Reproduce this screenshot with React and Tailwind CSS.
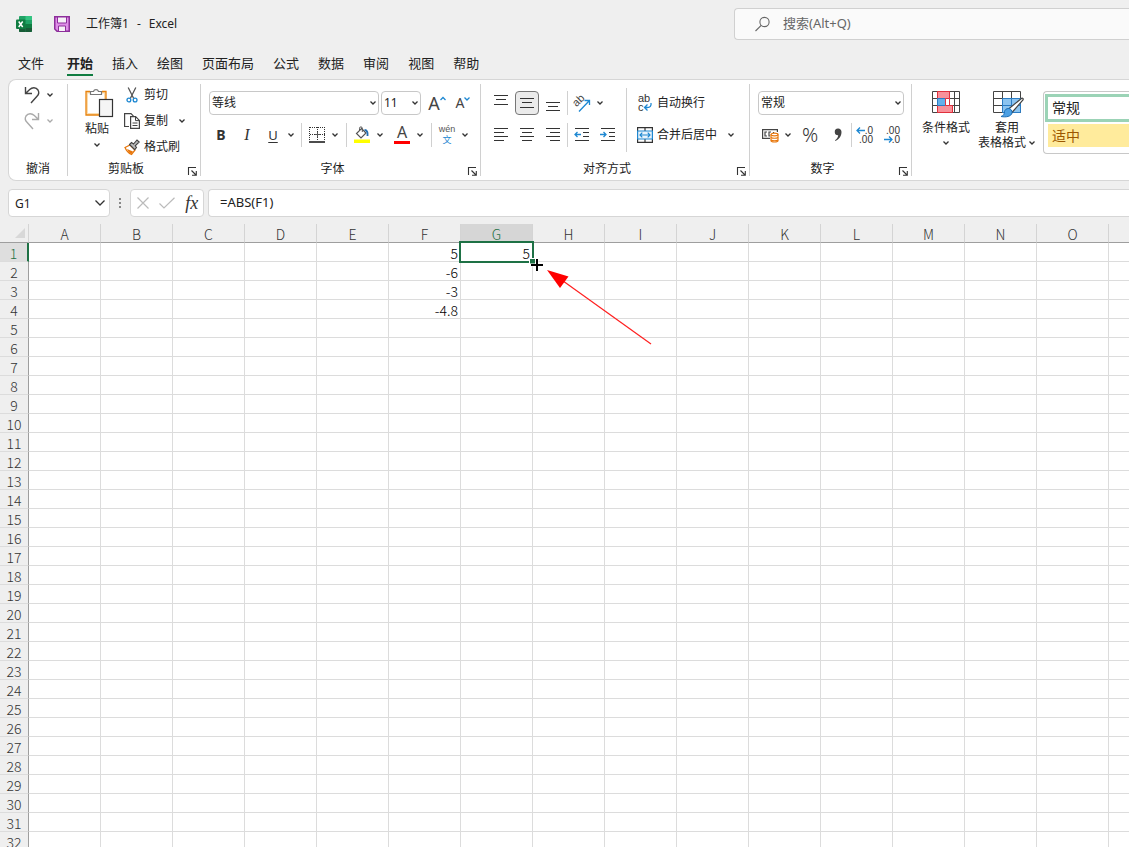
import clsx from 'clsx';

const TABS = ['文件', '开始', '插入', '绘图', '页面布局', '公式', '数据', '审阅', '视图', '帮助'];
const COLUMNS = 'ABCDEFGHIJKLMNOP'.split('');
const ROWS = Array.from({ length: 32 }, (_, i) => i + 1);
const CELLS = { F1: '5', G1: '5', F2: '-6', F3: '-3', F4: '-4.8' };
const ACTIVE = { col: 'G', row: 1 };

/* ── Icons ── */

const Svg = ({ w, h, className, children }) => (
    <svg width={w} height={h} viewBox={`0 0 ${w} ${h}`} fill="none" className={clsx('shrink-0 overflow-visible', className)} aria-hidden="true">
        {children}
    </svg>
);

const Chevron = ({ color = '#333' }) => (
    <Svg w={8} h={6}><path d="M1.5 1.5L4 4l2.5-2.5" stroke={color} strokeWidth="1.3" /></Svg>
);

const ExcelLogo = () => (
    <Svg w={16} h={16}>
        <rect x="3" y="0" width="13" height="16" rx="1" fill="#21a366" />
        <path d="M9.500 0H15a1 1 0 0 1 1 1v3H9.500z" fill="#33c481" />
        <path d="M3 8h6.500v4H3zM9.500 12H16v3a1 1 0 0 1-1 1H9.500z" fill="#185c37" />
        <path d="M9.500 8H16v4H9.500z" fill="#107c41" />
        <path d="M3 12h6.500v4H4a1 1 0 0 1-1-1z" fill="#185c37" />
        <rect x="0" y="3.500" width="9.500" height="9.500" rx="1" fill="#107c41" />
        <path d="M2.700 5.500l4 5.500M6.700 5.500l-4 5.500" stroke="#fff" strokeWidth="1.500" />
    </Svg>
);

const SaveIcon = () => (
    <Svg w={16} h={16}>
        <path d="M.75.75h14.500v14.500H3l-2.250-2.250z" fill="#df8fe8" stroke="#8d2f9b" strokeWidth="1.500" />
        <path d="M3.500 1h9v6h-9z" fill="#f6f0f7" stroke="#8d2f9b" />
        <path d="M4.500 15v-5h7v5" fill="#f6f0f7" stroke="#8d2f9b" />
    </Svg>
);

const SearchIcon = () => (
    <Svg w={16} h={16}>
        <circle cx="9.500" cy="6" r="4.600" stroke="#666" strokeWidth="1.100" />
        <path d="M6.200 9.300L.5 15" stroke="#666" strokeWidth="1.100" />
    </Svg>
);

const UndoIcon = ({ flip, color }) => (
    <Svg w={18} h={18} className={flip && '-scale-x-100'}>
        <path d="M2.500 1v6.500H9M2.500 7.500l4.200-4C9 1.300 13 1 15 4c1.300 2.300.8 4.500-1 6.300L8 17" stroke={color} strokeWidth="1.400" />
    </Svg>
);

const PasteIcon = () => (
    <Svg w={30} h={32} className="ml-1">
        <rect x="3" y="5.500" width="18" height="21.500" fill="#fff" stroke="#fbdcae" strokeWidth="2" />
        <path d="M6 4.500H2v23.500h13M18 4.500h4V12" stroke="#e8820c" strokeWidth="1.300" />
        <path d="M6.500 7.500v-3h3a2.600 2.600 0 0 1 5 0h3v3z" fill="#fff" stroke="#777" strokeWidth="1.200" />
        <rect x="15.500" y="12.500" width="13" height="17" fill="#f5f5f5" stroke="#333" strokeWidth="1.200" />
    </Svg>
);

const CutIcon = () => (
    <Svg w={12} h={16}>
        <path d="M2.200.5l5.500 11M9.800.5l-5.500 11" stroke="#555" strokeWidth="1.300" />
        <circle cx="2.900" cy="13" r="1.900" stroke="#1e88d2" strokeWidth="1.300" />
        <circle cx="9.100" cy="13" r="1.900" stroke="#1e88d2" strokeWidth="1.300" />
    </Svg>
);

const CopyIcon = () => (
    <Svg w={16} h={16}>
        <path d="M5 13.500H.6V.6H7l2.500 2.500" stroke="#444" strokeWidth="1.200" />
        <path d="M6.600 3.600h5l3.800 3.800v8H6.600z" fill="#fff" stroke="#444" strokeWidth="1.200" />
        <path d="M11.500 3.600v4h4M8.500 10h5M8.500 12.500h5" stroke="#444" />
    </Svg>
);

const PainterIcon = () => (
    <Svg w={16} h={16}>
        <path d="M1 8.500L6 6l5 5-3.500 4.500C5 14.500 2.500 12 1 8.500z" fill="#fff" stroke="#e8770c" strokeWidth="1.300" />
        <path d="M3 10l6 2.500-1.700 2.700C5.500 14.500 3.800 12.500 3 10z" fill="#e8770c" />
        <path d="M5.500 5.500l2-2 2 1.500L13 1l2.200 2-4 3.800 1.300 1.700-1.800 2.200z" fill="#bbb" stroke="#444" strokeWidth="1.100" />
    </Svg>
);

const LauncherIcon = () => (
    <Svg w={9} h={9}>
        <path d="M.5 8V.5H8M3.500 3.500L8 8M8.300 4v4.300H4" stroke="#333" strokeWidth="1.100" />
    </Svg>
);

const BordersIcon = () => (
    <Svg w={16} h={16}>
        <path d="M.5 0v14M15.500 0v14M8.500 0v14M1 .5h15M1 7.500h15" stroke="#333" strokeDasharray="1 1" />
        <path d="M6 7.500h5M8.500 5v5" stroke="#555" />
        <path d="M0 15h16" stroke="#111" strokeWidth="1.500" />
    </Svg>
);

const FillIcon = () => (
    <Svg w={16} h={18}>
        <path d="M7.500 2.500L12 7l-5 5-4.500-4.500z" fill="#fff" stroke="#555" strokeWidth="1.200" />
        <path d="M5.500 4.500V2.300a1.400 1.400 0 0 1 2.800 0V6" stroke="#555" />
        <path d="M10.500 4c2.500.2 3.500 2 3 6" stroke="#2470b3" strokeWidth="1.900" />
        <path d="M0 13.500h16v3.500H0z" fill="#ffff00" />
    </Svg>
);

const LINES = {
    left: ['M1 1.500h14M1 5.500h10', 'M1 9.500h14', 'M1 13.500h10'],
    center: ['M1 1.500h14M3 5.500h10', 'M1 9.500h14', 'M3 13.500h10'],
    right: ['M1 1.500h14M5 5.500h10', 'M1 9.500h14', 'M5 13.500h10'],
    top: ['M1 .5h14', 'M3 4.500h10', 'M1 9.500h14'],
    middle: ['M1 3.500h14', 'M3 7.500h10', 'M1 12.500h14'],
    bottom: ['M1 7.500h14', 'M3 11.500h10', 'M1 15.500h14'],
};

const LinesIcon = ({ kind }) => (
    <Svg w={16} h={16}>
        {LINES[kind].map(d => <path key={d} d={d} stroke="#333" />)}
    </Svg>
);

const IndentIcon = ({ out }) => (
    <Svg w={16} h={16}>
        <path d="M1 1.500h14M9 5.500h6M9 9.500h6M1 13.500h14" stroke="#333" />
        <path d={out ? 'M7 7.500H1M3.500 5L1 7.500 3.500 10' : 'M0 7.500h6M3.500 5L6 7.500 3.500 10'} stroke="#1e88d2" strokeWidth="1.300" />
    </Svg>
);

const OrientationIcon = () => (
    <Svg w={18} h={17}>
        <text x="1" y="10" transform="rotate(-45 5 8)" fontSize="11" fontFamily="Liberation Sans, sans-serif" fill="#444">ab</text>
        <path d="M6 16.500L16 6M11.500 5.500H16.500V10" stroke="#1e88d2" strokeWidth="1.300" />
    </Svg>
);

const WrapIcon = () => (
    <Svg w={16} h={18}>
        <g fontSize="11" fontFamily="Liberation Sans, sans-serif" fill="#333">
            <text x="1" y="8">ab</text>
            <text x="1" y="17">c</text>
        </g>
        <path d="M14 9c.5 3-1 4.500-3.500 4.500H8M10.500 10.500l-3 3 3 3" stroke="#1e88d2" strokeWidth="1.300" />
    </Svg>
);

const MergeIcon = () => (
    <Svg w={16} h={16}>
        <path d="M.6 4V.6h14.800V4M.6 12v3.400h14.800V12M8 .6V4M8 12v3.400" stroke="#333" strokeWidth="1.200" />
        <path d="M.6 4h14.800v8H.6z" fill="#e8f3fb" stroke="#1e88d2" strokeWidth="1.200" />
        <path d="M3 8h10M5.300 5.700L3 8l2.300 2.300M10.700 5.700L13 8l-2.300 2.300" stroke="#1e88d2" strokeWidth="1.200" />
    </Svg>
);

const CurrencyIcon = () => (
    <Svg w={17} h={16}>
        <path d="M8 11.400H.6V2.600h14.800V5" stroke="#444" strokeWidth="1.200" />
        <path d="M5 5H3v4h2M9 5H7v4h1M11.500 5v1" stroke="#444" strokeWidth="1.200" />
        <path d="M9 7.500v6c0 1 1.300 1.500 3.500 1.500s3.500-.5 3.500-1.500v-6" fill="#fff" stroke="#e8770c" strokeWidth="1.200" />
        <ellipse cx="12.500" cy="7.500" rx="3.500" ry="1.300" fill="#fff" stroke="#e8770c" strokeWidth="1.200" />
        <path d="M9 10.500c1.500 1 5.500 1 7 0M9 13c1.500 1 5.500 1 7 0" stroke="#e8770c" strokeWidth="1.200" />
    </Svg>
);

const DecimalIcon = ({ fewer }) => (
    <Svg w={16} h={18}>
        <g fontSize="10" fontFamily="Liberation Sans, sans-serif" fill="#333" textAnchor="end">
            <text x="16" y="8">{fewer ? '.00' : '.0'}</text>
            <text x="16" y="17">{fewer ? '.0' : '.00'}</text>
        </g>
        <path d={fewer ? 'M0 13.500h8M5 10.500L8 13.500 5 16.500' : 'M8 4.500H0M3 1.500L0 4.500 3 7.500'} stroke="#1e88d2" strokeWidth="1.300" />
    </Svg>
);

const ConditionalIcon = () => (
    <Svg w={28} h={24}>
        <path d="M.5 1.500h27v21H.5zM.5 8.500h27M.5 15.500h27M5.500 1.500v21M22.500 1.500v21" fill="#fff" stroke="#444" />
        <path d="M5.500 1.500h12v7h-12zM5.500 15.500h15v7h-15z" fill="#f8919a" stroke="#e0303c" />
        <path d="M5.500 8.500h8v7h-8z" fill="#64b0ea" stroke="#2b7cc4" />
        <path d="M13.500 8.500h4v7h-4z" fill="#fff" stroke="#e0303c" />
    </Svg>
);

const TableStyleIcon = () => (
    <Svg w={29} h={28}>
        <path d="M.5 1.500h27v21H.5z" fill="#fff" />
        <path d="M9.500 8.500h18v14h-18z" fill="#8cc4f0" />
        <path d="M.5 1.500h27v21H.5zM.5 8.500h27M.5 15.500h27M9.500 1.500v21M18.500 1.500v21" stroke="#444" />
        <path d="M9.500 8.500h18v14h-18zM9.500 15.500h18M18.500 8.500v14" stroke="#2b7cc4" />
        <path d="M29 8c1 0 1.500 1 1 2L19 22.500 15.500 19z" fill="#fff" stroke="#444" strokeWidth="1.200" />
        <path d="M15.500 18.500c2 0 4 2 3.500 4.500-.8 3.500-6 4.500-11 3.500 3-.8 3-2.500 3.500-5 .5-2 2-3 4-3z" fill="#4ba0e4" stroke="#1b6db5" />
    </Svg>
);

/* ── Ribbon pieces ── */

const Tool = ({ label, pressed, className, children }) => (
    <button type="button" aria-label={label} aria-pressed={pressed}
        className={clsx('w-6 h-6 shrink-0 flex items-center justify-center rounded', pressed && 'bg-[#ebebeb] border border-[#777]', className)}>
        {children}
    </button>
);

const More = ({ label, color }) => (
    <button type="button" aria-label={label} className="w-3 h-6 shrink-0 flex items-center justify-center">
        <Chevron color={color} />
    </button>
);

const TextTool = ({ icon, children }) => (
    <button type="button" className="h-6 flex items-center gap-0.5 whitespace-nowrap">
        <span className="w-5 flex justify-center">{icon}</span>
        {children}
    </button>
);

const Sep = ({ className }) => <span className={clsx('w-px shrink-0 bg-[#d0d0d0]', className)} />;

const Combo = ({ label, value, className }) => (
    <div className={clsx('relative h-6', className)}>
        <select aria-label={label} className="appearance-none w-full h-full pl-0.5 border border-[#c8c8c8] rounded bg-white">
            <option>{value}</option>
        </select>
        <span className="absolute right-0.5 inset-y-0 flex items-center pointer-events-none"><Chevron /></span>
    </div>
);

const Group = ({ title, launcher = true, className, children }) => (
    <>
        <section className={clsx('shrink-0 flex flex-col pt-[3px]', className)}>
            <div className="h-[78px]">{children}</div>
            <div className="flex h-4 items-center">
                <span className="flex-1 text-center">{title}</span>
                {launcher && (
                    <button type="button" aria-label={`${title}设置`} className="w-4 h-4 pb-px flex items-end justify-center">
                        <LauncherIcon />
                    </button>
                )}
            </div>
        </section>
        <Sep className="h-[92px] my-1" />
    </>
);

function Ribbon() {
    return (
        <div className="ml-2 h-[102px] flex bg-white border border-r-0 border-[#d6d6d6] rounded-l-lg overflow-hidden text-xs leading-4">
            <Group title="撤消" launcher={false} className="w-[58px]">
                <div className="pl-[11px] flex flex-col gap-0.5">
                    <div className="flex"><Tool label="撤消"><UndoIcon color="#444" /></Tool><More label="撤消列表" /></div>
                    <div className="flex"><Tool label="恢复"><UndoIcon flip color="#aaa" /></Tool><More label="恢复列表" color="#aaa" /></div>
                </div>
            </Group>

            <Group title="剪贴板" className="w-[132px]">
                <div className="pl-2 flex gap-1">
                    <button type="button" className="w-[42px] h-[70px] pt-1 flex flex-col items-center">
                        <PasteIcon />
                        <span className="mt-0.5">粘贴</span>
                        <span className="h-4 flex items-center"><Chevron /></span>
                    </button>
                    <div className="flex flex-col gap-0.5">
                        <TextTool icon={<CutIcon />}>剪切</TextTool>
                        <div className="flex gap-2"><TextTool icon={<CopyIcon />}>复制</TextTool><More label="复制选项" /></div>
                        <TextTool icon={<PainterIcon />}>格式刷</TextTool>
                    </div>
                </div>
            </Group>

            <Group title="字体" className="w-[279px]">
                <div className="pl-2 pt-2 flex flex-col gap-2">
                    <div className="flex gap-0.5">
                        <Combo label="字体" value="等线" className="w-[170px]" />
                        <Combo label="字号" value="11" className="w-10" />
                        <Tool label="增大字号" className="ml-0.5">
                            <span className="text-lg text-[#444]">A</span>
                            <Svg w={6} h={14}><path d="M.5 4L3 1.500 5.500 4" stroke="#1e88d2" strokeWidth="1.300" /></Svg>
                        </Tool>
                        <Tool label="减小字号">
                            <span className="text-sm text-[#444]">A</span>
                            <Svg w={6} h={14}><path d="M.5 1.500L3 4l2.500-2.500" stroke="#1e88d2" strokeWidth="1.300" /></Svg>
                        </Tool>
                    </div>
                    <div className="flex">
                        <div className="flex gap-0.5">
                            <Tool label="加粗"><b className="text-sm text-[#333]">B</b></Tool>
                            <Tool label="倾斜"><i className="text-base text-[#333] font-['Liberation_Serif',serif]">I</i></Tool>
                            <div className="flex"><Tool label="下划线"><u className="text-[13px] text-[#333] underline-offset-2">U</u></Tool><More label="下划线样式" /></div>
                        </div>
                        <Sep className="ml-1 mr-[3px]" />
                        <Tool label="边框"><BordersIcon /></Tool><More label="边框样式" />
                        <Sep className="ml-[5px] mr-[3px]" />
                        <Tool label="填充颜色"><FillIcon /></Tool><More label="填充颜色列表" />
                        <Tool label="字体颜色" className="ml-1 flex-col">
                            <span className="text-base leading-[13px] text-[#444]">A</span>
                            <span className="w-4 h-[3px] mt-0.5 bg-[#ff0000]" />
                        </Tool>
                        <More label="字体颜色列表" />
                        <Sep className="ml-[5px] mr-[3px]" />
                        <Tool label="拼音" className="flex-col font-['Liberation_Sans','Noto_Sans_CJK_SC',sans-serif]">
                            <span className="text-[9px] leading-[10px] text-[#555]">wén</span>
                            <span className="text-[9px] leading-[13px] text-[#1e88d2]">文</span>
                        </Tool>
                        <More label="拼音选项" />
                    </div>
                </div>
            </Group>

            <Group title="对齐方式" className="w-[268px]">
                <div className="flex">
                    <div className="w-[145px] pl-2 pt-2 flex flex-col gap-2">
                        <div className="flex gap-0.5">
                            <Tool label="顶端对齐"><LinesIcon kind="top" /></Tool>
                            <Tool label="垂直居中" pressed><LinesIcon kind="middle" /></Tool>
                            <Tool label="底端对齐"><LinesIcon kind="bottom" /></Tool>
                            <Sep />
                            <div className="flex"><Tool label="方向"><OrientationIcon /></Tool><More label="方向选项" /></div>
                        </div>
                        <div className="flex gap-0.5">
                            <Tool label="左对齐"><LinesIcon kind="left" /></Tool>
                            <Tool label="居中"><LinesIcon kind="center" /></Tool>
                            <Tool label="右对齐"><LinesIcon kind="right" /></Tool>
                            <Sep />
                            <Tool label="减少缩进量"><IndentIcon out /></Tool>
                            <Tool label="增加缩进量"><IndentIcon /></Tool>
                        </div>
                    </div>
                    <Sep className="h-16 mt-[5px]" />
                    <div className="pl-2 pt-2 flex flex-col gap-2">
                        <TextTool icon={<WrapIcon />}>自动换行</TextTool>
                        <div className="flex gap-2"><TextTool icon={<MergeIcon />}>合并后居中</TextTool><More label="合并选项" /></div>
                    </div>
                </div>
            </Group>

            <Group title="数字" className="w-[161px]">
                <div className="pl-2 pt-2 flex flex-col gap-2">
                    <Combo label="数字格式" value="常规" className="w-[146px]" />
                    <div className="flex">
                        <Tool label="会计数字格式"><CurrencyIcon /></Tool><More label="货币列表" />
                        <Tool label="百分比样式" className="ml-1"><span className="text-xl leading-6 font-light text-[#333]">%</span></Tool>
                        <Tool label="千位分隔样式" className="ml-1">
                            <Svg w={8} h={14}><path d="M4 .5a3.300 3.300 0 0 1 3.500 3.500c0 4-2.500 7.500-6 9l-.5-.8c2-1.300 3-3 3.200-5A3.300 3.300 0 1 1 4 .5z" fill="#444" /></Svg>
                        </Tool>
                        <Sep className="mx-px" />
                        <Tool label="增加小数位数"><DecimalIcon /></Tool>
                        <Tool label="减少小数位数" className="ml-[3px]"><DecimalIcon fewer /></Tool>
                    </div>
                </div>
            </Group>

            <div className="flex-1 min-w-0 pl-1.5 pt-2.5 flex items-start overflow-hidden">
                <button type="button" className="w-14 shrink-0 flex flex-col items-center leading-[15px]">
                    <ConditionalIcon />
                    <span className="mt-1.5">条件格式</span>
                    <span className="h-[15px] flex items-center"><Chevron /></span>
                </button>
                <button type="button" className="w-[66px] shrink-0 flex flex-col items-center leading-[15px]">
                    <TableStyleIcon />
                    <span className="mt-0.5">套用</span>
                    <span className="flex items-center gap-0.5 whitespace-nowrap">表格格式<Chevron /></span>
                </button>
                <div className="flex-1 min-w-0 h-[63px] ml-[3px] mt-px pl-px pt-0.5 flex flex-col gap-0.5 border border-r-0 border-[#c8c8c8] rounded-l text-sm text-left">
                    <button type="button" className="h-7 pl-1 text-left border-[3px] border-r-0 border-[#9bd3b6]">常规</button>
                    <button type="button" className="h-[23px] ml-[3px] pl-1 text-left bg-[#ffeb9c] text-[#9c5700]">适中</button>
                </div>
            </div>
        </div>
    );
}

function FormulaBar() {
    return (
        <div className="ml-2 mt-2 mb-[7px] h-7 flex text-xs">
            <div className="relative w-[102px]">
                <input aria-label="名称框" defaultValue="G1" className="w-full h-full pl-1.5 bg-white border border-[#d6d6d6] rounded" />
                <span className="absolute right-1 inset-y-0 flex items-center pointer-events-none">
                    <Svg w={12} h={8}><path d="M1.500 1.500L6 6l4.500-4.500" stroke="#333" strokeWidth="1.300" /></Svg>
                </span>
            </div>
            <div className="w-5 flex flex-col items-center justify-center gap-0.5">
                {[0, 1, 2].map(i => <span key={i} className="size-0.5 bg-[#888]" />)}
            </div>
            <div className="w-[74px] flex items-center justify-around bg-white border border-[#d6d6d6] rounded">
                <button type="button" aria-label="取消"><Svg w={14} h={14}><path d="M1.500 1.500l11 11M12.500 1.500l-11 11" stroke="#bbb" strokeWidth="1.200" /></Svg></button>
                <button type="button" aria-label="输入"><Svg w={16} h={12}><path d="M.5 6.500L5 11 15.500.8" stroke="#bbb" strokeWidth="1.200" /></Svg></button>
                <button type="button" className="font-['Liberation_Serif',serif] text-lg leading-5 italic text-[#333]">fx</button>
            </div>
            <input aria-label="编辑栏" defaultValue="=ABS(F1)"
                className="flex-1 min-w-0 ml-1 pl-[11px] text-[13px] bg-white border border-r-0 border-[#d6d6d6] rounded-l" />
        </div>
    );
}

function Cell({ col, row }) {
    const active = col === ACTIVE.col && row === ACTIVE.row;
    return (
        <td className="relative h-[19px] p-0 pt-0.5 pr-0.5 text-right text-black border-r border-b border-[#dcdcdc]">
            {CELLS[col + row]}
            {active && (
                <>
                    <span className="absolute z-10 -inset-0.5 border-2 border-[#1e7145]" />
                    <span className="absolute z-10 -right-[3px] -bottom-[3px] size-1.5 bg-[#1e7145] border-t border-l border-white" />
                    {/* fill cursor */}
                    <Svg w={15} h={15} className="absolute z-10 left-[68px] top-[14px]">
                        <path d="M8 1v13M1 8h13" stroke="#fff" strokeWidth="3" />
                        <path d="M8 2v12M2 8h12" stroke="#000" strokeWidth="2" />
                    </Svg>
                    <Svg w={108} h={78} className="absolute z-10 left-[84px] top-[25px]">
                        <path d="M16 11.500L106 76" stroke="#ff2020" strokeWidth="1.200" />
                        <path d="M2 2l21.500 6.500L15 20z" fill="#ff0000" />
                    </Svg>
                </>
            )}
        </td>
    );
}

function Sheet() {
    return (
        <div className="flex-1 min-h-0 overflow-hidden">
            <table className="w-[1181px] table-fixed border-separate border-spacing-0 text-sm leading-4 font-light text-[#333] bg-white font-['Noto_Sans_CJK_SC',sans-serif]">
                <thead>
                    <tr>
                        <th className="w-[29px] h-[19px] p-0 bg-[#efefef] border-r border-b border-r-[#d4d4d4] border-b-[#9e9e9e]">
                            <Svg w={12} h={11} className="ml-auto mr-0.5"><path d="M11 0v10H1z" fill="#d8d8d8" /></Svg>
                        </th>
                        {COLUMNS.map(c => (
                            <th key={c} scope="col"
                                className={clsx('w-[72px] h-[19px] p-0 pt-0.5 font-light border-r border-b border-r-[#d4d4d4] border-b-[#9e9e9e]',
                                    c === ACTIVE.col ? 'bg-[#d6d6d6] text-[#1e7145]' : 'bg-[#efefef]')}>
                                {c}
                            </th>
                        ))}
                    </tr>
                </thead>
                <tbody>
                    {ROWS.map(r => (
                        <tr key={r}>
                            <th scope="row"
                                className={clsx('h-[19px] p-0 pt-0.5 font-light border-b border-b-[#dcdcdc]',
                                    r === ACTIVE.row ? 'bg-[#dedede] text-[#1e7145] border-r-2 border-r-[#1e7145]' : 'bg-[#efefef] border-r border-r-[#9e9e9e]')}>
                                {r}
                            </th>
                            {COLUMNS.map(c => <Cell key={c} col={c} row={r} />)}
                        </tr>
                    ))}
                </tbody>
            </table>
        </div>
    );
}

export default function App() {
    return (
        <div className="h-screen flex flex-col overflow-hidden bg-[#efefef] text-[#222] font-['Noto_Sans','Noto_Sans_CJK_SC',sans-serif]">
            {/* ── Title bar ── */}
            <header className="h-12 shrink-0 pl-4 flex items-center">
                <ExcelLogo />
                <button type="button" aria-label="保存" className="ml-[22px]"><SaveIcon /></button>
                <h1 className="ml-4 text-xs flex gap-2"><span>工作簿1</span><span>-</span><span>Excel</span></h1>
                <label className="ml-auto w-[395px] h-8 pl-5 flex items-center gap-3 bg-[#fafafa] border border-r-0 border-[#d0d0d0] rounded-l-sm">
                    <SearchIcon />
                    <input type="search" aria-label="搜索" placeholder="搜索(Alt+Q)" className="flex-1 min-w-0 text-[13px] bg-transparent placeholder:text-[#666]" />
                </label>
            </header>

            <nav className="h-[31px] shrink-0 pl-[18px] flex items-start gap-[19px] text-[13px] leading-5">
                {TABS.map(t => (
                    <button key={t} type="button"
                        className={clsx('h-7 pt-[5px] pb-px border-b-2', t === '开始' ? 'ml-1 font-bold border-[#107c41]' : 'border-transparent')}>
                        {t}
                    </button>
                ))}
            </nav>

            <div className="shrink-0"><Ribbon /></div>
            <div className="shrink-0"><FormulaBar /></div>
            <Sheet />
        </div>
    );
}
